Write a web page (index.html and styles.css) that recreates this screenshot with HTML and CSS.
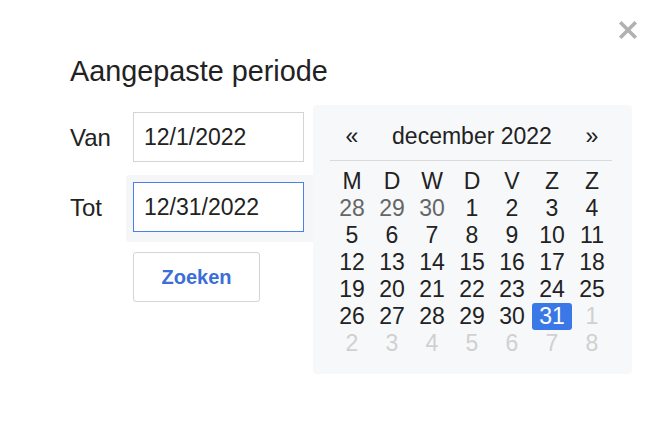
FILE: index.html
```html
<!DOCTYPE html>
<html lang="nl">
<head>
  <meta charset="UTF-8" />
  <meta name="viewport" content="width=device-width, initial-scale=1.0"/>
  <title>Aangepaste periode</title>
  <link rel="stylesheet" href="styles.css">
</head>
<body>
  <div class="dialog">
    <button class="close" aria-label="Sluiten">
      <svg width="18" height="18" viewBox="0 0 18 18"><path d="M2.5 2.5 L15.5 15.5 M15.5 2.5 L2.5 15.5" stroke="#b1b1b1" stroke-width="3.6" stroke-linecap="square"/></svg>
    </button>
    <h2 class="title">Aangepaste periode</h2>
    <div class="body">
      <div class="form">
        <label class="label" for="van">Van</label>
        <div class="field"><input id="van" class="date" value="12/1/2022"></div>
        <label class="label" for="tot">Tot</label>
        <div class="field active"><input id="tot" class="date focused" value="12/31/2022"></div>
        <div></div>
        <div class="field"><button class="search">Zoeken</button></div>
      </div>
      <div class="calendar">
        <div class="cal-head">
          <span class="nav">«</span>
          <span class="month">december 2022</span>
          <span class="nav">»</span>
        </div>
        <div class="cal-grid">
          <span>M</span><span>D</span><span>W</span><span>D</span><span>V</span><span>Z</span><span>Z</span>
          <span class="prev">28</span><span class="prev">29</span><span class="prev">30</span><span>1</span><span>2</span><span>3</span><span>4</span>
          <span>5</span><span>6</span><span>7</span><span>8</span><span>9</span><span>10</span><span>11</span>
          <span>12</span><span>13</span><span>14</span><span>15</span><span>16</span><span>17</span><span>18</span>
          <span>19</span><span>20</span><span>21</span><span>22</span><span>23</span><span>24</span><span>25</span>
          <span>26</span><span>27</span><span>28</span><span>29</span><span>30</span><span class="selected">31</span><span class="next">1</span>
          <span class="next">2</span><span class="next">3</span><span class="next">4</span><span class="next">5</span><span class="next">6</span><span class="next">7</span><span class="next">8</span>
        </div>
      </div>
    </div>
  </div>
</body>
</html>
```

FILE: styles.css
```css
body { margin: 0; background: #fff; font-family: "Liberation Sans", Arial, sans-serif; color: #222; }
.dialog { position: relative; padding: 57px 30px 0 70px; height: 424px; box-sizing: border-box; }
.close { position: absolute; top: 21px; right: 25px; width: 18px; height: 18px; padding: 0; border: none; background: none; }
.close svg { display: block; }
.title { margin: 0 0 19px; font-size: 28.8px; line-height: 29px; font-weight: normal; }
.body { display: flex; align-items: flex-start; }
.form { display: grid; grid-template-columns: 56px 187px; grid-template-rows: 67px 67px auto; row-gap: 3px; }
.label { font-size: 24px; line-height: 50px; padding-top: 8px; }
.field { padding: 7px 0 10px 7px; border-radius: 3px 0 0 3px; }
.field.active { background: #f5f6f8; }
.date { box-sizing: border-box; width: 171px; height: 50px; border: 1px solid #d4d4d4; padding: 0 10px; font: 23px "Liberation Sans", Arial, sans-serif; color: #222; background: #fff; outline: none; }
.date.focused { border-color: #4a80e8; }
.search { width: 127px; height: 50px; border: 1px solid #d4d4d4; border-radius: 3px; background: #fff; color: #3a6fd8; font: bold 20px "Liberation Sans", Arial, sans-serif; }
.calendar { width: 319px; height: 269px; box-sizing: border-box; padding: 18px 20px 0 19px; background: #f7f8fa; border-radius: 4px; }
.cal-head { display: grid; grid-template-columns: 40px 200px 40px; line-height: 27px; font-size: 23px; text-align: center; padding-bottom: 10px; border-bottom: 1px solid #d9dadc; margin: 0 0 7px -2px; padding-left: 2px; }
.cal-grid { display: grid; grid-template-columns: repeat(7, 40px); grid-auto-rows: 27px; font-size: 23px; line-height: 27px; text-align: center; }
.cal-grid .prev { color: #666; }
.cal-grid .next { color: #d0d0d0; }
.cal-grid .selected { background: #3b78e7; color: #fff; border-radius: 3px; }
```
